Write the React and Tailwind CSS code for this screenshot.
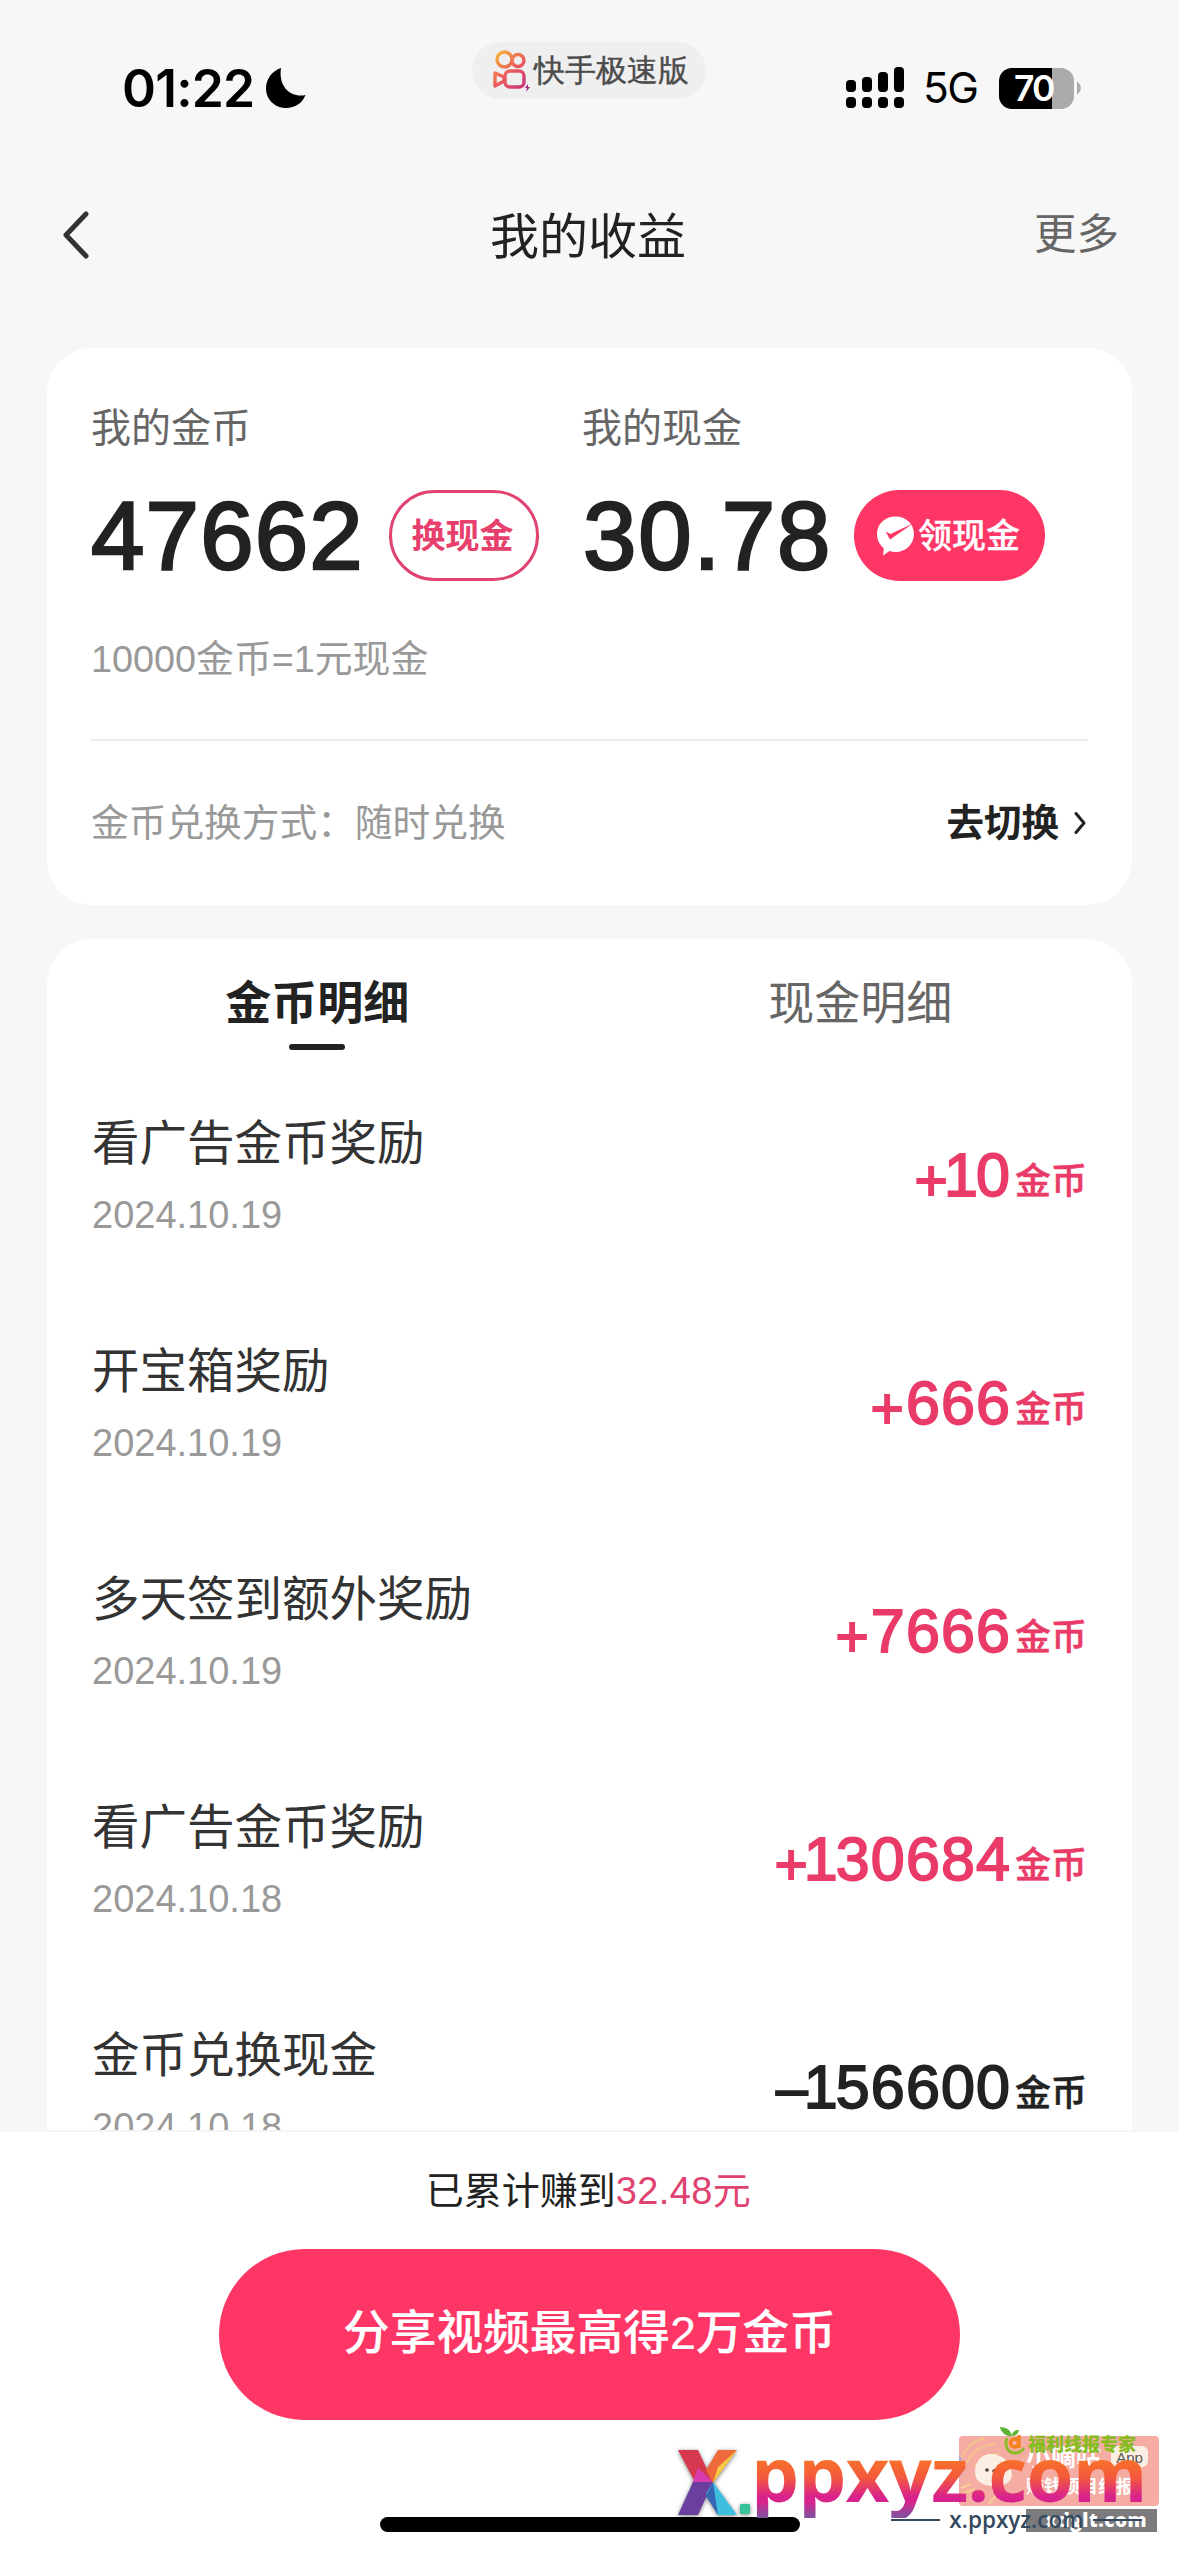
import React from 'react';

const records = [
  { title: '看广告金币奖励', date: '2024.10.19', sign: '+', amount: '10' },
  { title: '开宝箱奖励', date: '2024.10.19', sign: '+', amount: '666' },
  { title: '多天签到额外奖励', date: '2024.10.19', sign: '+', amount: '7666' },
  { title: '看广告金币奖励', date: '2024.10.18', sign: '+', amount: '130684' },
  { title: '金币兑换现金', date: '2024.10.18', sign: '–', amount: '156600', spent: true },
];

const AppBadge = () => (
  <div className="absolute left-[472px] top-[42px] w-[234px] h-[57px] rounded-full bg-[#efefef] flex items-center pl-[20px]">
    <svg width="40" height="42" viewBox="0 0 40 42" fill="none" className="shrink-0">
      <defs>
        <linearGradient id="ks" x1="0" y1="0" x2="36" y2="40" gradientUnits="userSpaceOnUse">
          <stop offset="0.1" stopColor="#f2b33c" />
          <stop offset="0.5" stopColor="#ee5f5b" />
          <stop offset="1" stopColor="#c22a7e" />
        </linearGradient>
      </defs>
      <g stroke="url(#ks)" strokeWidth="3.4" strokeLinejoin="round">
        <circle cx="12.5" cy="9.5" r="7.5" />
        <circle cx="26" cy="10.5" r="6" />
        <rect x="13" y="21" width="19" height="16" rx="5" />
        <path d="M3 23v13l9-5v-4z" />
      </g>
      <path d="M36 34l-3 4h2l-1 4 4-5h-2z" fill="#a3247f" />
    </svg>
    <span className="ml-[2px] text-[30.5px] leading-none font-medium text-[#4c4c4c] [-webkit-text-stroke:0.4px_#4c4c4c]">快手极速版</span>
  </div>
);

const StatusBar = () => (
  <div className="relative h-[176px] shrink-0 font-['Inter'] text-black">
    <div className="flex items-start justify-between pl-[122px] pr-[98px] pt-[62px]">
      <div className="flex items-center h-[52px]">
        <span className="text-[51.5px] leading-[52px] font-semibold tracking-[-0.8px] w-[144px] whitespace-nowrap">01:22</span>
        <svg width="40" height="40" viewBox="0 0 40 40">
          <path d="M15 0C6 3 0 11 0 20.500C0 31.500 9 40 20 40C29 40 36.500 35 39.500 27C26 30 12 20 15 0Z" />
        </svg>
      </div>
      <div className="flex items-center h-[52px]">
        <svg width="60" height="42" viewBox="0 0 60 42">
          <rect x="0" y="13" width="10" height="12" rx="4" />
          <rect x="16" y="10" width="10" height="15" rx="4" />
          <rect x="32" y="5" width="10" height="20" rx="4" />
          <rect x="48" y="0" width="10" height="25" rx="4" />
          <rect x="0" y="30" width="10" height="11" rx="4" />
          <rect x="16" y="30" width="10" height="11" rx="4" />
          <rect x="32" y="30" width="10" height="11" rx="4" />
          <rect x="48" y="30" width="10" height="11" rx="4" />
        </svg>
        <span className="ml-[17px] w-[76px] text-[42.5px] leading-none tracking-[-1.5px]">5G</span>
        <div className="w-[75px] h-[41px] pl-[15px] rounded-[13px] bg-[linear-gradient(90deg,#000_53px,#ababab_53px)] text-white text-[35.5px] leading-[41px] font-semibold tracking-[-2px]">
          70
        </div>
        <svg width="7" height="14" viewBox="0 0 7 14">
          <path d="M3 0.500C8 4 8 10 3 13.500Z" fill="#ababab" />
        </svg>
      </div>
    </div>
    <AppBadge />
  </div>
);

const NavBar = () => (
  <div className="h-[118px] shrink-0 flex items-center justify-between pl-[62px] pr-[60px]">
    <svg width="80" height="48" viewBox="0 0 80 48" fill="none">
      <path d="M24 3L4 24l20 21" stroke="#333" strokeWidth="5" strokeLinecap="round" strokeLinejoin="round" />
    </svg>
    <h1 className="text-[49px] leading-none text-[#222] pt-[4px]">我的收益</h1>
    <span className="text-[42.500px] leading-none text-[#666]">更多</span>
  </div>
);

const BalanceCard = () => (
  <div className="mt-[54px] h-[557px] shrink-0 mx-[47px] px-[44px] rounded-[45px] bg-white">
    <div className="flex pt-[52px]">
      <div className="w-[491px]">
        <p className="text-[40px] leading-[56px] text-[#666]">我的金币</p>
        <div className="mt-[34px] h-[91px] flex items-center">
          <span className="w-[298px] text-[96px] leading-none tracking-[1.2px] text-[#222] [-webkit-text-stroke:2.5px_#222]">47662</span>
          <button className="w-[150px] h-[91px] pr-[3px] rounded-full border-[3px] border-[#e0436f] text-[34px] leading-none font-bold text-[#e8406c]">
            换现金
          </button>
        </div>
      </div>
      <div>
        <p className="text-[40px] leading-[56px] text-[#666]">我的现金</p>
        <div className="mt-[34px] h-[91px] flex items-center">
          <span className="pl-px w-[272px] text-[96px] leading-none tracking-[1.8px] text-[#222] [-webkit-text-stroke:2.5px_#222]">30.78</span>
          <button className="w-[191px] h-[91px] pr-[3px] rounded-full bg-[#fe3666] flex items-center justify-center gap-[3px] text-[34px] leading-none font-medium text-white">
            <svg width="39" height="42" viewBox="0 0 39 42">
              <path d="M19.500 1.500C30 1.500 38 9 38 19s-8 18-18.500 18c-2 0-4-.3-6-1L7 40.500l.8-7C4 30 1 25 1 19 1 9 9 1.500 19.500 1.500z" fill="#fff" />
              <path d="M9.500 16.500l5 2.500L37 8.500 14 24.500z" fill="#fe3666" />
            </svg>
            <span className="[-webkit-text-stroke:0.3px_#fff]">领现金</span>
          </button>
        </div>
      </div>
    </div>
    <p className="mt-[51px] text-[37.800px] leading-[54px] text-[#999]">10000金币=1元现金</p>
    <div className="mt-[53px] h-[2px] bg-[#ececec]" />
    <div className="mt-[55px] flex items-center justify-between text-[37.700px] leading-[54px]">
      <span className="text-[#999]">金币兑换方式：随时兑换</span>
      <span className="flex items-center text-[37.500px] font-bold text-[#222]">
        去切换
        <svg width="29" height="24" viewBox="2 0 29 24" fill="none">
          <path d="M19 2.500L27 12l-8 9.500" stroke="#222" strokeWidth="3" strokeLinecap="round" strokeLinejoin="round" />
        </svg>
      </span>
    </div>
  </div>
);

// the digit 1 sits tighter than the other figures
const Amount = ({ value }) =>
  value.split('').map((char, i) =>
    char === '1' ? (
      <span key={i} className="-ml-[6px] -mr-[3px]">
        1
      </span>
    ) : (
      char
    )
  );

const RecordRow = ({ title, date, sign, amount, spent }) => (
  <div className="h-[228px] shrink-0 flex justify-between">
    <div className="pl-px">
      <p className="text-[47.500px] leading-[66px] text-[#333]">{title}</p>
      <p className="mt-[11px] text-[38px] leading-[54px] text-[#999]">{date}</p>
    </div>
    <div className={`mt-[29px] h-[70px] flex items-baseline leading-[70px] ${spent ? 'text-[#222]' : 'text-[#ea3b68]'}`}>
      <span
        className={`text-[61px] tracking-[1.1px] ${
          spent ? '[-webkit-text-stroke:1.8px_#222]' : '[-webkit-text-stroke:1.8px_#ea3b68]'
        }`}
      >
        <span className={`relative mr-px text-[57px] ${spent ? 'top-0' : 'top-[4px]'}`}>{sign}</span>
        <Amount value={amount} />
      </span>
      <span
        className={`relative -top-[2px] ml-[4px] mr-px text-[36px] font-medium ${
          spent ? '[-webkit-text-stroke:0.5px_#222]' : '[-webkit-text-stroke:0.5px_#ea3b68]'
        }`}
      >
        金币
      </span>
    </div>
  </div>
);

const Records = () => (
  <div className="mt-[34px] mx-[47px] h-[1191px] shrink-0 rounded-t-[45px] bg-white overflow-hidden">
    <div className="grid grid-cols-2 h-[172px] pt-[32px] text-[46px] leading-[64px] text-center">
      <div className="flex flex-col items-center pr-[2px] font-bold text-[#222]">
        金币明细
        <span className="mt-[9px] w-[56px] h-[6px] rounded-full bg-[#222]" />
      </div>
      <div className="pr-px text-[#666]">现金明细</div>
    </div>
    <div className="px-[44px] flex flex-col">
      {records.map((record, i) => (
        <RecordRow key={i} {...record} />
      ))}
    </div>
  </div>
);

const Footer = () => (
  <div className="h-[426px] shrink-0 flex flex-col items-center border-t-2 border-[#f5f5f5] bg-white">
    <p className="mt-[32px] pr-[2px] text-[38px] leading-[54px] text-[#222]">
      已累计赚到<span className="text-[#e0436f] tracking-[0.4px]">32.48元</span>
    </p>
    <button className="mt-[31px] w-[741px] h-[171px] pb-[3px] rounded-full bg-[#fe3666] text-[46.700px] leading-none font-medium text-white [-webkit-text-stroke:0.2px_#fff]">
      分享视频最高得2万金币
    </button>
    <div className="mt-[97px] w-[420px] h-[15px] rounded-full bg-black" />
  </div>
);

const Stamp = () => (
  <div className="absolute left-[670px] top-[2420px] w-[509px] h-[136px] overflow-hidden whitespace-nowrap leading-none">
    <div className="absolute left-[289px] top-[16px] w-[200px] h-[70px] rounded-[4px] bg-[#f5aca2] overflow-hidden">
      <svg width="199" height="69" viewBox="0 0 199 69" fill="none">
        <path d="M2 22C8 10 16 4 26 2M8 27C14 14 22 10 36 8M16 32C20 20 28 18 40 18" stroke="#f3c48e" strokeWidth="2" />
        <path d="M0 18v24l7-10z" fill="#b9a3c8" />
        <path d="M2 52l10-4M2 58l14-5M30 68c4-8 10-10 18-12" stroke="#f6cf94" strokeWidth="2" />
        <path d="M16 36C16 24 24 17 34 18c12 2 18 10 19 20 0 9-9 12-18 12-11 0-19-4-19-14z" fill="#fbeee2" />
        <circle cx="28" cy="34" r="1.800" fill="#444" />
        <circle cx="35" cy="35" r="1.800" fill="#444" />
      </svg>
      <span className="absolute left-[67px] top-[9px] text-[25px] font-bold text-white">小嘀咕</span>
      <span className="absolute left-[152px] top-[10px] w-[37px] h-[21px] rounded-[6px] bg-[#fbeee2] text-[15px] leading-[24px] text-center text-[#555]">App</span>
      <span className="absolute left-[67px] top-[42px] text-[18px] font-bold text-white">赚钱项目线报</span>
    </div>
    <svg className="absolute left-[329px] top-[6px]" width="28" height="30" viewBox="0 0 28 30" fill="none">
      <path d="M13 10C8 11 2 7 1 1c6 0 11 3 12 9zM13 10c0-4 3-6 7-6-1 4-3 6-7 6z" fill="#5fb336" />
      <path d="M8 12c-3 8 1 15 8 15 4 0 7-2 9-5" stroke="#8dbb2c" strokeWidth="3" />
      <circle cx="15.500" cy="17" r="4" stroke="#f5841f" strokeWidth="3.500" />
      <path d="M20 9v13" stroke="#f5841f" strokeWidth="3.500" />
    </svg>
    <span className="absolute left-[358px] top-[16px] text-[18px] font-black text-[#86bc1f]">福利线报专家</span>
    <div className="absolute left-[356px] top-[89px] w-[131px] h-[23px] bg-[#7b7b7d] pr-[10px] text-right font-['Open_Sans'] text-[19px] leading-[22px] font-extrabold text-white tracking-[0.5px]">
      xdglt.com
    </div>
    <svg className="absolute left-[6px] top-[28px] drop-shadow-[0_1px_2px_rgba(0,0,0,0.5)]" width="76" height="70" viewBox="0 0 76 70">
      <path d="M2 2h20l15 32-17 2z" fill="#d5384f" />
      <path d="M22 20l15 14-21 2z" fill="#d93bb0" />
      <path d="M42 2h19L37 35 30 22z" fill="#ee6a3c" />
      <path d="M61 2L37 35l5-16z" fill="#f3c945" />
      <path d="M17 34h20L22 67H2z" fill="#6a3fa0" />
      <path d="M37 34l24 33H42L30 46z" fill="#3ebfe0" />
      <path d="M37 34L30 48l12 19z" fill="#3567b5" />
      <rect x="64" y="56" width="10" height="10" rx="1" fill="#38c29a" />
    </svg>
    <span className="absolute left-[81px] top-[8px] font-['Open_Sans'] text-[76px] leading-[90px] font-bold tracking-[-0.8px] text-transparent bg-clip-text bg-[linear-gradient(180deg,#f7702a_36%,#f4593c_55%,#d9238c_76%,#d9238c_82%,#84509e_98%)]">
      ppxyz.com
    </span>
    <div className="absolute left-[221px] top-[88px] w-[251px] h-[24px] flex items-center justify-between text-[#34495e]">
      <span className="w-[49px] h-[2px] bg-[#34495e]" />
      <span className="font-['Open_Sans'] text-[22.500px] leading-[22px] font-semibold">x.ppxyz.com</span>
      <span className="w-[49px] h-[2px] bg-[#34495e]" />
    </div>
  </div>
);

const App = () => {
  return (
    <div className="relative w-[1179px] h-[2556px] overflow-hidden flex flex-col bg-[#f7f7f7] font-['Liberation_Sans','Noto_Sans_CJK_SC',sans-serif]">
      <StatusBar />
      <NavBar />
      <BalanceCard />
      <Records />
      <Footer />
      <Stamp />
    </div>
  );
};

export default App;
